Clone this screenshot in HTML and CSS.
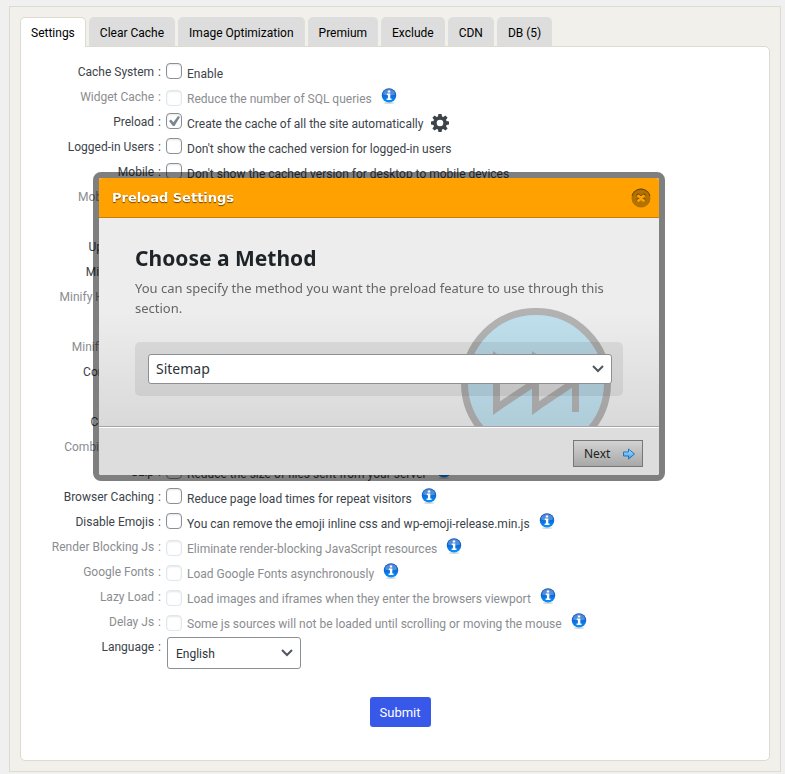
FILE: index.html
```html
<!DOCTYPE html>
<html lang="en">
<head>
<meta charset="utf-8">
<title>Cache Settings</title>
<link rel="stylesheet" href="styles.css">
</head>
<body>
<svg class="sprite" aria-hidden="true">
  <defs>
    <linearGradient id="info-fill" x1="0" y1="0" x2="0" y2="1">
      <stop offset="0" stop-color="#1452b4"/>
      <stop offset=".5" stop-color="#0a6ad8"/>
      <stop offset="1" stop-color="#0a96ff"/>
    </linearGradient>
    <linearGradient id="arrow-fill" x1="0" y1="0" x2="0" y2="1">
      <stop offset="0" stop-color="#b4e4ff"/>
      <stop offset="1" stop-color="#2f9df0"/>
    </linearGradient>
  </defs>
  <symbol id="info" viewBox="0 0 16 16">
    <ellipse cx="8" cy="15" rx="5" ry="1" fill="#000" opacity=".15"/>
    <circle cx="8" cy="7.4" r="7.2" fill="url(#info-fill)"/>
    <path d="M2 6.5a6 5.6 0 0 1 12 0q-6 2-12 0z" fill="#fff" opacity=".28"/>
    <path d="M6.8 2.6h2.4v2H6.8zM5.8 5.6h3.5v5h1.2v1.3H5.6v-1.3h1.3V6.9H5.8z" fill="#fff"/>
  </symbol>
</svg>

<main class="wrap">
  <nav class="tabs">
    <button class="tab active" type="button">Settings</button>
    <button class="tab" type="button">Clear Cache</button>
    <button class="tab" type="button">Image Optimization</button>
    <button class="tab" type="button">Premium</button>
    <button class="tab" type="button">Exclude</button>
    <button class="tab" type="button">CDN</button>
    <button class="tab" type="button">DB (5)</button>
  </nav>

  <form class="panel">
    <div class="row"><span class="name">Cache System</span><input type="checkbox" id="o1"><label for="o1">Enable</label></div>
    <div class="row off"><span class="name">Widget Cache</span><input type="checkbox" id="o2" disabled><label for="o2">Reduce the number of SQL queries</label><svg class="info"><use href="#info"/></svg></div>
    <div class="row"><span class="name">Preload</span><input type="checkbox" id="o3" checked><label for="o3">Create the cache of all the site automatically</label><svg class="gear" viewBox="0 0 18 18"><path fill="#3c434a" fill-rule="evenodd" d="M7.4 0h3.2l.4 2.6 1.3.5L14.4 1.5l2.200 2.200-1.600 2.100.5 1.300 2.500.4v3.100l-2.500.4-.5 1.300 1.600 2.100-2.200 2.200-2.100-1.600-1.300.5-.4 2.500H7.400L7 15.500l-1.300-.5-2.100 1.600-2.200-2.200L3 12.300l-.5-1.300L0 10.600V7.500l2.500-.4L3 5.800 1.400 3.700l2.200-2.200 2.100 1.600L7 2.600zM9 5.700a3.300 3.300 0 1 0 0 6.600 3.300 3.300 0 0 0 0-6.600z"/></svg></div>
    <div class="row"><span class="name">Logged-in Users</span><input type="checkbox" id="o4"><label for="o4">Don't show the cached version for logged-in users</label></div>
    <div class="row"><span class="name">Mobile</span><input type="checkbox" id="o5"><label for="o5">Don't show the cached version for desktop to mobile devices</label></div>
    <div class="row off"><span class="name">Mobile Theme</span><input type="checkbox" id="o6" disabled><label for="o6">Create cache for mobile theme</label></div>
    <div class="row"><span class="name">New Post</span><input type="checkbox" id="o7"><label for="o7">Clear cache files when a post is published</label></div>
    <div class="row"><span class="name">Update Post</span><input type="checkbox" id="o8"><label for="o8">Clear cache files when a post is updated</label></div>
    <div class="row"><span class="name">Minify HTML</span><input type="checkbox" id="o9"><label for="o9">You can decrease the size of page</label></div>
    <div class="row off"><span class="name">Minify HTML Plus</span><input type="checkbox" id="o10" disabled><label for="o10">More powerful minify html</label></div>
    <div class="row"><span class="name">Minify Css</span><input type="checkbox" id="o11"><label for="o11">You can decrease the size of css files</label></div>
    <div class="row off"><span class="name">Minify Css Plus</span><input type="checkbox" id="o12" disabled><label for="o12">More powerful minify css</label></div>
    <div class="row"><span class="name">Combine Css</span><input type="checkbox" id="o13"><label for="o13">Reduce requests through combined css files</label></div>
    <div class="row off"><span class="name">Minify Js</span><input type="checkbox" id="o14" disabled><label for="o14">You can decrease the size of js files</label></div>
    <div class="row"><span class="name">Combine Js</span><input type="checkbox" id="o15"><label for="o15">Reduce requests through combined js files</label></div>
    <div class="row off"><span class="name">Combine Js Plus</span><input type="checkbox" id="o16" disabled><label for="o16">Reduce requests in the footer</label></div>
    <div class="row"><span class="name">Gzip</span><input type="checkbox" id="o17"><label for="o17">Reduce the size of files sent from your server</label><svg class="info"><use href="#info"/></svg></div>
    <div class="row"><span class="name">Browser Caching</span><input type="checkbox" id="o18"><label for="o18">Reduce page load times for repeat visitors</label><svg class="info"><use href="#info"/></svg></div>
    <div class="row"><span class="name">Disable Emojis</span><input type="checkbox" id="o19"><label for="o19">You can remove the emoji inline css and wp-emoji-release.min.js</label><svg class="info"><use href="#info"/></svg></div>
    <div class="row off"><span class="name">Render Blocking Js</span><input type="checkbox" id="o20" disabled><label for="o20">Eliminate render-blocking JavaScript resources</label><svg class="info"><use href="#info"/></svg></div>
    <div class="row off"><span class="name">Google Fonts</span><input type="checkbox" id="o21" disabled><label for="o21">Load Google Fonts asynchronously</label><svg class="info"><use href="#info"/></svg></div>
    <div class="row off"><span class="name">Lazy Load</span><input type="checkbox" id="o22" disabled><label for="o22">Load images and iframes when they enter the browsers viewport</label><svg class="info"><use href="#info"/></svg></div>
    <div class="row off"><span class="name">Delay Js</span><input type="checkbox" id="o23" disabled><label for="o23">Some js sources will not be loaded until scrolling or moving the mouse</label><svg class="info"><use href="#info"/></svg></div>
    <div class="row language"><label class="name" for="lang">Language</label><span class="picker"><select id="lang"><option>English</option></select><svg class="chevron" viewBox="0 0 12 8"><path d="M1 1l5 5 5-5"/></svg></span></div>
    <div class="actions"><button class="submit" type="submit">Submit</button></div>
  </form>

  <section class="modal" role="dialog" aria-labelledby="modal-title">
    <header class="modal-head">
      <h2 id="modal-title">Preload Settings</h2>
      <button class="close" type="button" aria-label="Close"><svg viewBox="0 0 20 20"><circle cx="10" cy="10" r="9.5" fill="#b37100"/><path d="M1 8a9.300 9.300 0 0 1 18 0" fill="none" stroke="#694300"/><path d="M7 7l6 5M13 7l-6 5" stroke="#6f4700" stroke-width="3" stroke-linecap="round"/><path d="M7.500 8l5 4.500M12.500 8l-5 4.500" stroke="#ffa100" stroke-width="3" stroke-linecap="round"/></svg></button>
    </header>
    <div class="modal-body">
      <svg class="logo" viewBox="0 0 150 150">
        <circle cx="75" cy="75" r="71.5" fill="#cef0ff"/>
        <path d="M32 43l39 27V43l39 27v8l-39 26V74L32 100z" fill="#f2f2f2"/>
        <g fill="none" stroke="#c0c0c0" stroke-width="7">
          <circle cx="75" cy="75" r="71.5"/>
          <path d="M35.500 46v54L74.500 74M74.500 46v54L114.500 73v31"/>
        </g>
        <path d="M32 43l10 7H32zM71 43l10 7H71zM32 95h8v6l-8 6zM71 95h8v6l-8 6z" fill="#c0c0c0"/>
      </svg>
      <h1>Choose a Method</h1>
      <p>You can specify the method you want the preload feature to use through this section.</p>
      <div class="field"><span class="picker"><select aria-label="Method"><option>Sitemap</option></select><svg class="chevron" viewBox="0 0 12 8"><path d="M1 1l5 5 5-5"/></svg></span></div>
    </div>
    <footer class="modal-foot">
      <button class="next" type="button">Next<svg viewBox="0 0 12 12"><path d="M.5 4h5V1l6 5-6 5V8h-5z" fill="url(#arrow-fill)" stroke="#2374bd" stroke-linejoin="round"/></svg></button>
    </footer>
  </section>
</main>
</body>
</html>
```
FILE: styles.css
```css
* { box-sizing: border-box; }

body {
  margin: 0;
  padding: 6px 4px 2px 9px;
  background: #f0f0f1;
  color: #3c434a;
  font: 12px/27px Roboto, sans-serif;
}

button, select, input { margin: 0; font: inherit; }

.sprite { position: absolute; width: 0; height: 0; }

.wrap {
  position: relative;
  padding: 10px;
  border: 1px solid #dddbcf;
  background: #f1f0eb;
}

.tabs { display: flex; gap: 3px; }

.tab {
  height: 29px;
  padding: 2px 10px 0;
  border: 1px solid #dedede;
  border-bottom: 0;
  border-radius: 5px 5px 0 0;
  background: #ddd;
  color: #000;
}

.tab.active {
  height: 30px;
  margin-bottom: -1px;
  border-color: #dddbcf;
  background: #fff;
  z-index: 1;
}

.panel {
  padding: 12px 10px 33px;
  border: 1px solid #dddbcf;
  border-radius: 0 5px 5px 5px;
  background: #fff;
}

.row { display: flex; height: 25px; }

.name {
  width: 130px;
  margin-right: 5px;
  text-align: right;
  white-space: nowrap;
}

.name::after { content: ":"; margin-left: 4px; }

.off { color: #8a8d90; }

.row input {
  appearance: none;
  width: 16px;
  height: 16px;
  margin: 4px 5px 0 0;
  border: 1px solid #8c8f94;
  border-radius: 4px;
  background: #fff;
  box-shadow: inset 0 1px 2px rgba(0, 0, 0, .1);
}

.row input:disabled { margin-top: 6px; border-color: #dfe8ec; }

.row input:checked::before {
  content: "";
  display: block;
  width: 11px;
  height: 10px;
  margin: 2px;
  background: #7b8894;
  clip-path: polygon(0 50%, 18% 36%, 40% 62%, 82% 0, 100% 10%, 50% 100%, 35% 100%);
}

.row label:not(.name) { padding-top: 2px; white-space: nowrap; }

.info { width: 16px; height: 16px; margin: 4px 0 0 9px; }
.gear { width: 18px; height: 18px; margin: 5px 0 0 8px; }

.language { height: 34px; }

.picker { display: inline-flex; align-items: center; position: relative; }

.picker select {
  appearance: none;
  width: 100%;
  border: 1px solid #8c8f94;
  border-radius: 3px;
  background: #fff;
  color: #2c3338;
}

.chevron {
  position: absolute;
  right: 8px;
  width: 12px;
  height: 8px;
  fill: none;
  stroke: #50575e;
  stroke-width: 2;
  pointer-events: none;
}

.language .picker { width: 134px; height: 32px; margin: 3px 0 0 1px; }
.language select { height: 32px; padding: 2px 8px 0; }

.actions { display: flex; justify-content: center; padding: 29px 0 0 10px; }

.submit {
  height: 30px;
  padding: 0 10px;
  border: 0;
  border-radius: 3px;
  background: #3858e9;
  color: #fff;
  font-size: 13px;
}

.modal {
  position: absolute;
  top: 165px;
  left: 83px;
  width: 572px;
  z-index: 2;
  border: 6px solid rgba(0, 0, 0, .5);
  border-radius: 8px;
  background-clip: padding-box;
  font-family: "Noto Sans", sans-serif;
}

.modal-head {
  display: flex;
  align-items: center;
  justify-content: space-between;
  height: 40px;
  padding: 0 8px 0 13px;
  border-bottom: 1px solid #c97f00;
  border-radius: 3px 3px 0 0;
  background: #ffa100;
}

.modal-head h2 {
  margin: 0;
  color: #fff;
  font-family: "DejaVu Sans", sans-serif;
  font-size: 13px;
  text-shadow: 0 1px 1px rgba(0, 0, 0, .6);
}

.close { width: 20px; height: 20px; padding: 0; border: 0; background: none; }
.close svg { display: block; }

.modal-body {
  position: relative;
  overflow: hidden;
  padding: 25px 36px 30px;
  border-bottom: 1px solid #a5a5a5;
  background: linear-gradient(#ededed 45%, #d9d9d9);
}

.logo {
  position: absolute;
  left: 362px;
  top: 90px;
  width: 150px;
  height: 150px;
  mix-blend-mode: multiply;
}

.modal-body h1 {
  margin: 0 0 5px;
  color: #1d2327;
  font-size: 21px;
  line-height: 30px;
}

.modal-body p {
  position: relative;
  margin: 0;
  color: #666;
  font-size: 13px;
  line-height: 20px;
}

.field {
  position: relative;
  margin-top: 24px;
  padding: 12px 11px 12px 13px;
  border-radius: 5px;
  background: rgba(0, 0, 0, .07);
}

.field .picker { display: flex; }
.field select { height: 30px; padding: 0 7px; font-size: 14px; line-height: 20px; }

.modal-foot {
  display: flex;
  justify-content: flex-end;
  padding: 12px 16px 8px;
  border-top: 1px solid #fff;
  border-radius: 0 0 3px 3px;
  background: #ddd;
}

.next {
  display: flex;
  align-items: center;
  justify-content: space-between;
  width: 70px;
  height: 27px;
  padding: 0 7px 0 10px;
  border: 1px solid #777;
  background: linear-gradient(#d2d2d2, #a8a8a8);
  color: #222;
}

.next svg { width: 12px; height: 12px; }
```
